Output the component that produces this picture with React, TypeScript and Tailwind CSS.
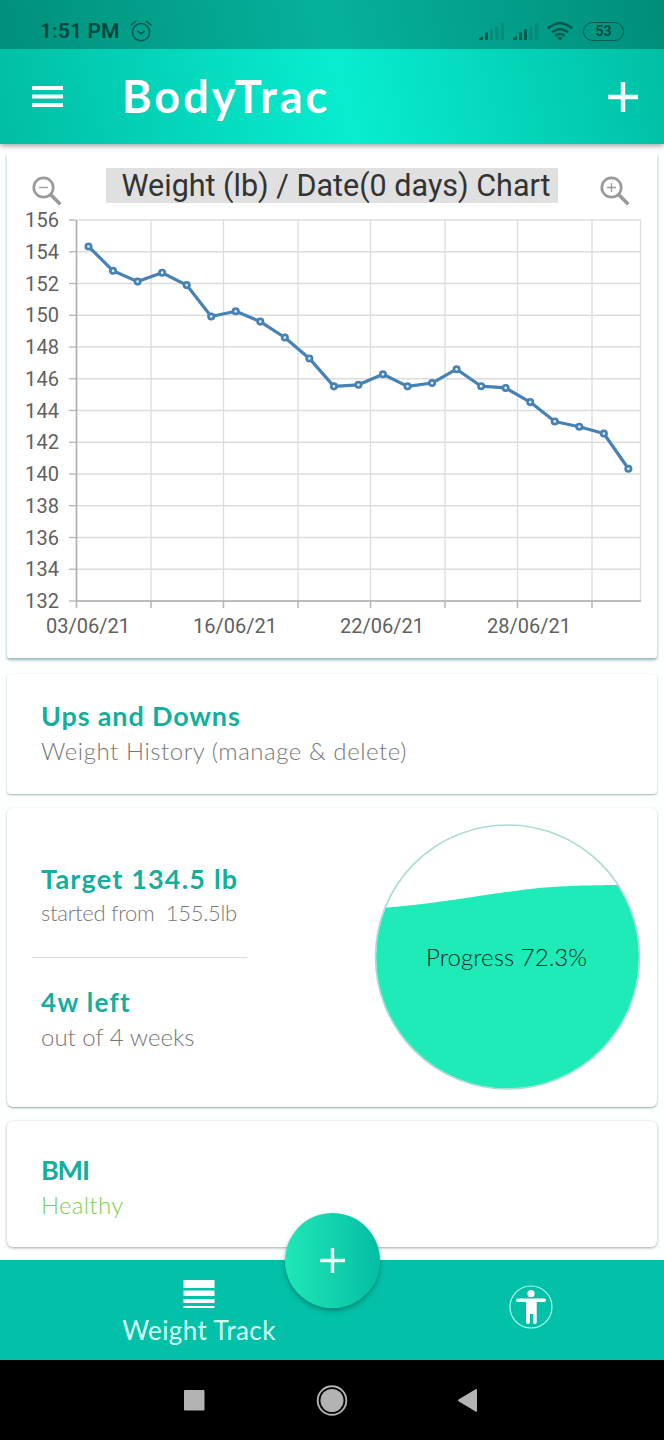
import type { ReactNode } from 'react';

const weights = [
  154.33, 152.8, 152.12, 152.68, 151.9, 149.92, 150.25, 149.6, 148.6, 147.28, 145.52, 145.62,
  146.28, 145.52, 145.73, 146.6, 145.53, 145.42, 144.53, 143.31, 142.98, 142.55, 140.33,
];

const yTicks = [156, 154, 152, 150, 148, 146, 144, 142, 140, 138, 136, 134, 132];
const xTicks = [69.5, 144, 216.5, 291, 363.5, 438, 510.5, 585];
const dates = [
  { label: '03/06/21', x: 81 },
  { label: '16/06/21', x: 228 },
  { label: '22/06/21', x: 375 },
  { label: '28/06/21', x: 522 },
];

const toY = (w: number) => 16 + (156 - w) * 15.875;
const toX = (i: number) => 81.5 + i * 24.54;

function WeightChart() {
  const line = weights.map((w, i) => `${toX(i)},${toY(w)}`).join(' ');

  return (
    <svg width="650" height="455" viewBox="0 0 650 455" className="block font-[Roboto,sans-serif]">
      {yTicks.map(t => (
        <g key={t}>
          <line x1="62" x2="69" y1={toY(t)} y2={toY(t)} stroke="#b4b4b4" strokeWidth="1.3" />
          <line x1="70" x2="634" y1={toY(t)} y2={toY(t)} stroke="#dcdcdc" strokeWidth="1.3" />
          <text x="52" y={toY(t) + 7} textAnchor="end" fontSize="20" textLength="34" fill="#606060">{t}</text>
        </g>
      ))}
      {xTicks.map(x => (
        <g key={x}>
          <line x1={x} x2={x} y1="16" y2="397" stroke="#dcdcdc" strokeWidth="1.3" />
          <line x1={x} x2={x} y1="397" y2="404" stroke="#b4b4b4" strokeWidth="1.5" />
        </g>
      ))}
      <line x1="633.5" x2="633.5" y1="16" y2="397" stroke="#dcdcdc" strokeWidth="1.3" />
      <path d="M69.5 16V397H634" fill="none" stroke="#b0b0b0" strokeWidth="1.6" />
      {dates.map(d => (
        <text key={d.label} x={d.x} y="429" textAnchor="middle" fontSize="20" textLength="84" fill="#606060">
          {d.label}
        </text>
      ))}
      <polyline points={line} fill="none" stroke="#4682b4" strokeWidth="3.2" strokeLinejoin="round" />
      {weights.map((w, i) => (
        <circle key={i} cx={toX(i)} cy={toY(w)} r="2.7" fill="#e8f2fa" stroke="#4682b4" strokeWidth="2.7" />
      ))}
    </svg>
  );
}

function ZoomIcon({ plus }: { plus?: boolean }) {
  return (
    <svg width="32" height="32" viewBox="0 0 32 32" fill="none" stroke="#9a9a9a">
      <circle cx="11.5" cy="11.5" r="9.7" strokeWidth="2.7" />
      <path d="M18.5 18.5L28.3 28.3" strokeWidth="3.6" />
      <path d={plus ? 'M7 11.5H16M11.5 7V16' : 'M7 11.5H16'} strokeWidth="1.3" />
    </svg>
  );
}

function Signal({ active }: { active: number }) {
  return (
    <svg width="25" height="17" viewBox="0 0 25 17" fill="#005b4e">
      <path d="M0 17V15.5L4 13V17Z" />
      {[6, 11, 16.3, 22].map((x, i) => (
        <rect key={x} x={x} y={9.5 - i * 3.1} width="3" height={7.5 + i * 3.1} opacity={i < active ? 1 : 0.28} />
      ))}
    </svg>
  );
}

function StatusBar() {
  return (
    <div className="h-[49px] bg-black/25 flex items-start justify-between pl-[40px] pr-[40px] pt-[19px] text-[#00483d]">
      <div className="flex items-center gap-[11px]">
        <span className="font-[Roboto,sans-serif] text-[21px] leading-6 font-semibold tracking-[0.1px] whitespace-nowrap">1:51 PM</span>
        <svg width="22" height="22" viewBox="0 0 22 22" fill="none" stroke="#00594c" strokeWidth="1.5" strokeLinecap="round">
          <circle cx="11" cy="12.2" r="8.6" />
          <path d="M7.6 11.2L11 13.8L14.4 11.2M1 5L5.6 1.3M21 5L16.4 1.3" />
        </svg>
      </div>
      <div className="flex items-center h-6">
        <Signal active={1} />
        <span className="w-[9px]" />
        <Signal active={2} />
        <svg width="26" height="19" viewBox="0 0 26 19" fill="none" stroke="#00594c" strokeWidth="2.5" className="ml-[9px]">
          <path d="M1 6.3Q13 -3.7 25 6.3M5 10.3Q13 3.9 21 10.3M8.6 13.7Q13 10.2 17.4 13.7" />
          <path d="M10.3 16.2Q13 14 15.7 16.2L13 18.8Z" fill="#00594c" stroke="none" />
        </svg>
        <div className="ml-[10px] w-[41px] h-[19px] rounded-full border-[1.5px] border-[#00594c] flex items-center justify-center font-[Roboto,sans-serif] text-[14px] leading-none font-semibold">
          53
        </div>
      </div>
    </div>
  );
}

function Heading({ children, className }: { children: ReactNode; className: string }) {
  return <h2 className={`font-bold text-[#12b09c] whitespace-pre ${className}`}>{children}</h2>;
}

function Caption({ children, className }: { children: ReactNode; className: string }) {
  return <p className={`font-light whitespace-pre ${className}`}>{children}</p>;
}

export default function App() {
  return (
    <div className="w-[664px] h-[1440px] overflow-hidden bg-[#fdfefe] flex flex-col font-[Lato,sans-serif]">
      <header className="relative h-[144px] shrink-0 bg-[linear-gradient(77deg,#00bda3_0%,#08edd0_51%,#00bda3_100%)] shadow-[0_2px_5px_rgba(0,0,0,0.35)]">
        <StatusBar />
        <div className="h-[95px] flex items-center pl-8 pr-[26px]">
          <svg width="31" height="21" viewBox="0 0 31 21" fill="#fff">
            <path d="M0 0H31V4H0ZM0 8.5H31V12.5H0ZM0 17H31V21H0Z" />
          </svg>
          <h1 className="ml-[59px] -mt-[2px] text-[45px] leading-[56px] font-bold tracking-[3px] text-white whitespace-nowrap">BodyTrac</h1>
          <svg width="30" height="30" viewBox="0 0 30 30" stroke="#fff" strokeWidth="4.4" className="ml-auto">
            <path d="M15 0V30M0 15H30" />
          </svg>
        </div>
      </header>

      <main className="flex-1 flex flex-col pl-[7px] pr-[7px] pt-2">
        {/* Weight chart */}
        <section className="h-[506px] bg-white rounded-[3px] shadow-[0_2px_3px_rgba(40,110,110,0.5)]">
          <div className="h-[52px] flex items-start justify-between pl-[25px] pr-[25px] pt-4 font-[Roboto,sans-serif]">
            <div className="pt-2"><ZoomIcon /></div>
            <div className="w-[452px] h-[35px] bg-[#e0e0e0] pl-2 text-center text-[30.5px] leading-[36px] text-[#333] whitespace-nowrap">
              Weight (lb) / Date(0 days) Chart
            </div>
            <div className="pt-2"><ZoomIcon plus /></div>
          </div>
          <WeightChart />
        </section>

        {/* History */}
        <section className="mt-4 h-[120px] bg-white rounded-[4px] shadow-[0_1px_2px_rgba(40,100,90,0.45)] pl-[34px] pt-6">
          <Heading className="text-[27px] leading-9 tracking-[0.85px]">Ups and Downs</Heading>
          <Caption className="-mt-px text-[24px] leading-9 tracking-[0.55px] text-[#777]">Weight History (manage &amp; delete)</Caption>
        </section>

        {/* Target and progress */}
        <section className="mt-[14px] h-[299px] bg-white rounded-[6px] shadow-[0_1px_2px_rgba(40,90,90,0.5)] flex justify-between pl-[25px] pr-[17px]">
          <div className="w-[215px] pt-[53px]">
            <div className="pl-[9px] h-[96px]">
              <Heading className="text-[27px] leading-9 tracking-[1.2px]">Target 134.5 lb</Heading>
              <Caption className="text-[22px] leading-8 tracking-[-0.3px] text-[#777]">started from  155.5lb</Caption>
            </div>
            <div className="border-t-[1.5px] border-[#dadada] pl-[9px] pt-[26px]">
              <Heading className="text-[26px] leading-9 tracking-[1.3px]">4w left</Heading>
              <Caption className="text-[24px] leading-[34px] text-[#777]">out of 4 weeks</Caption>
            </div>
          </div>
          <svg width="266" height="266" viewBox="0 0 266 266" className="mt-4">
            <clipPath id="gauge">
              <circle cx="133.5" cy="133" r="131.5" />
            </clipPath>
            <path
              d="M0 84.5C60 81 110 70 165 64C195 61.5 220 61 266 61V266H0Z"
              fill="#1eebb8"
              clipPath="url(#gauge)"
            />
            <circle cx="133.5" cy="133" r="132" fill="none" stroke="#a9dcd2" strokeWidth="1.6" />
            <text x="52" y="142" fontSize="24" fontWeight="300" textLength="161" fill="#0f2a22">Progress 72.3%</text>
          </svg>
        </section>

        {/* BMI */}
        <section className="mt-[14px] h-[126px] bg-white rounded-[6px] shadow-[0_1px_3px_rgba(0,0,0,0.35)] pl-[34px] pt-[31px]">
          <Heading className="text-[27px] leading-9 tracking-[-1.2px]">BMI</Heading>
          <Caption className="text-[24px] leading-[34px] tracking-[0.3px] text-[#78cf4e]">Healthy</Caption>
        </section>
      </main>

      <nav className="relative h-[100px] shrink-0 bg-[#03c1a8] flex text-white">
        <div className="w-[398px] flex flex-col items-center pt-5">
          <svg width="32" height="28" viewBox="0 0 32 28" fill="#fff">
            <path d="M0.5 0H31.5V8H0.5ZM0.5 10.5H31.5V16H0.5ZM0.5 19H31.5V23H0.5ZM0.5 26H31.5V28H0.5Z" />
          </svg>
          <span className="mt-[6px] text-[26px] leading-8 tracking-[0.4px] whitespace-nowrap text-[#d8fff7]">Weight Track</span>
        </div>
        <div className="flex-1 flex justify-center pt-[25px]">
          <svg width="44" height="44" viewBox="0 0 44 44" fill="#fff">
            <circle cx="22" cy="22" r="21" fill="none" stroke="#b5fbee" strokeWidth="1.1" />
            <circle cx="22" cy="8.7" r="3.6" />
            <path d="M8.5 13.5H35.5Q37 13.5 37 15.2Q37 17 35.5 17H27.7V37Q27.7 39 26 39Q24 39 24 37V29H21V37Q21 39 19 39Q17 39 17 37V17H8.5Q7 17 7 15.2Q7 13.5 8.5 13.5Z" />
          </svg>
        </div>
        <button className="absolute left-[284.5px] -top-[47px] w-[95px] h-[95px] rounded-full bg-linear-to-r from-[#1ee8b6] to-[#04bda4] shadow-[0_3px_5px_rgba(0,60,50,0.4)] flex items-center justify-center">
          <svg width="25" height="25" viewBox="0 0 25 25" stroke="#fff" strokeWidth="3.4">
            <path d="M12.5 0V25M0 12.5H25" />
          </svg>
        </button>
      </nav>

      <div className="h-20 shrink-0 bg-black">
        <svg width="664" height="80" viewBox="0 0 664 80" fill="#b3b3b3">
          <rect x="184" y="30" width="20.5" height="20.5" rx="1" />
          <circle cx="332" cy="40.5" r="11.5" />
          <circle cx="332" cy="40.5" r="14.3" fill="none" stroke="#b3b3b3" strokeWidth="1.9" />
          <path d="M476 29Q477 29 477 30V51Q477 52 476 51.7L458.5 41.2Q457.5 40.3 458.5 39.6Z" />
        </svg>
      </div>
    </div>
  );
}
